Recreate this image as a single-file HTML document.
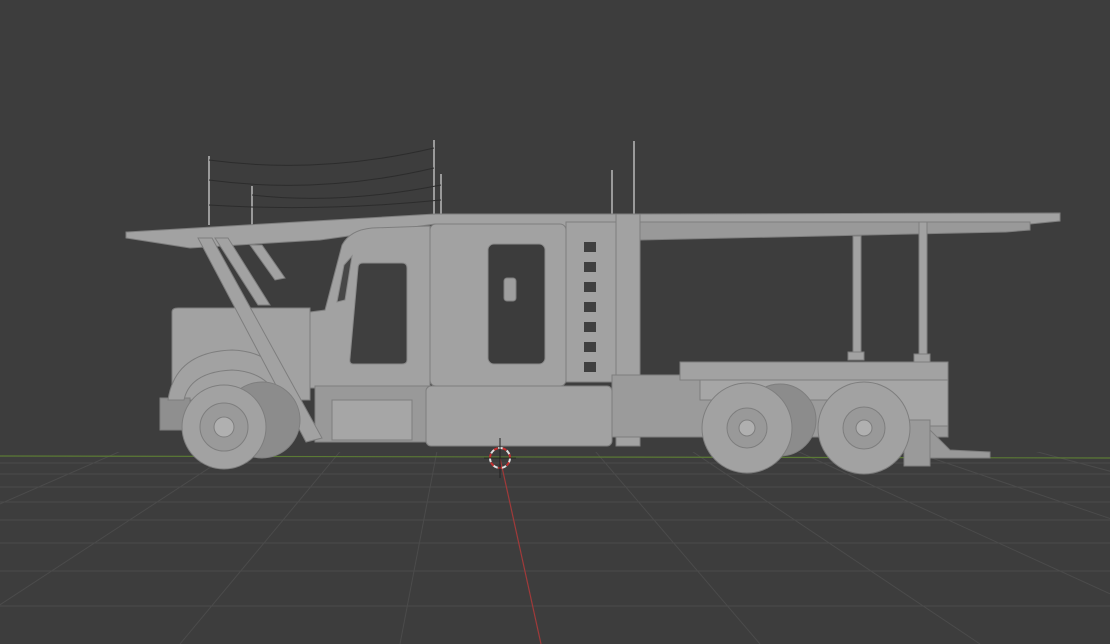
<!DOCTYPE html>
<html><head><style>html,body{margin:0;padding:0;background:#3d3d3d;width:1110px;height:644px;overflow:hidden}</style></head>
<body>
<svg width="1110" height="644" viewBox="0 0 1110 644" xmlns="http://www.w3.org/2000/svg">
<rect width="1110" height="644" fill="#3d3d3d"/>
<defs><clipPath id="g"><rect x="0" y="452" width="1110" height="192"/></clipPath></defs>
<g clip-path="url(#g)" stroke="#4b4b4b" stroke-width="1">
<line x1="0" y1="463" x2="1110" y2="463"/><line x1="0" y1="474" x2="1110" y2="474"/>
<line x1="0" y1="487" x2="1110" y2="487"/><line x1="0" y1="502" x2="1110" y2="502"/>
<line x1="0" y1="520" x2="1110" y2="520"/><line x1="0" y1="543" x2="1110" y2="543"/>
<line x1="0" y1="571" x2="1110" y2="571"/><line x1="0" y1="606" x2="1110" y2="606"/>
<line x1="466" y1="300" x2="-900" y2="644"/><line x1="466" y1="300" x2="-600" y2="644"/>
<line x1="466" y1="300" x2="-320" y2="644"/><line x1="466" y1="300" x2="-60" y2="644"/>
<line x1="466" y1="300" x2="180" y2="644"/><line x1="466" y1="300" x2="400" y2="644"/>
<line x1="466" y1="300" x2="760" y2="644"/><line x1="466" y1="300" x2="980" y2="644"/>
<line x1="466" y1="300" x2="1220" y2="644"/><line x1="466" y1="300" x2="1480" y2="644"/>
<line x1="466" y1="300" x2="1760" y2="644"/><line x1="466" y1="300" x2="2060" y2="644"/>
</g>
<line x1="0" y1="456" x2="1110" y2="458" stroke="#5b7a35" stroke-width="1.2"/>
<line x1="500" y1="458" x2="541" y2="644" stroke="#a03a3a" stroke-width="1.2"/>
<g fill="#a2a2a2" stroke="#7e7e7e" stroke-width="1">
<g stroke="#9a9a9a" stroke-width="2"><line x1="209" y1="156" x2="209" y2="225"/><line x1="252" y1="186" x2="252" y2="225"/><line x1="434" y1="140" x2="434" y2="215"/><line x1="441" y1="174" x2="441" y2="215"/><line x1="612" y1="170" x2="612" y2="215"/><line x1="634" y1="141" x2="634" y2="215"/></g>
<g fill="none" stroke="#2c2c2c" stroke-width="1"><path d="M209 160 Q320 175 434 148"/><path d="M209 180 Q320 195 434 168"/><path d="M252 195 Q340 205 441 185"/><path d="M209 205 Q320 212 441 200"/></g>
<polygon points="126,232 435,214 640,214 1060,213 1060,221 1030,224 640,236 435,224 320,240 190,248 126,238"/>
<polygon points="590,222 1030,222 1030,230 1006,232 640,240 590,238" fill="#999"/>
<polygon points="215,238 228,238 270,305 258,305"/>
<polygon points="250,245 262,245 285,278 275,280"/>
<rect x="853" y="236" width="8" height="120"/><rect x="919" y="222" width="8" height="136"/>
<rect x="848" y="352" width="16" height="8"/><rect x="914" y="354" width="16" height="8"/>
<path d="M172 312 Q172 308 178 308 L310 308 L310 400 L172 400 Z"/>
<path d="M310 312 L325 310 L342 245 Q350 230 372 228 L430 226 L430 388 L310 388 Z"/>
<rect x="430" y="224" width="136" height="162" rx="6"/>
<rect x="566" y="222" width="50" height="160"/>
<rect x="616" y="214" width="24" height="232"/>
<path d="M358 268 Q358 263 363 263 L402 263 Q407 263 407 268 L407 360 Q407 364 402 364 L353 364 Q349 364 350 358 Z" fill="#3f3f3f" stroke="#8a8a8a"/>
<path d="M344 265 L352 256 L345 300 L337 302 Z" fill="#474747" stroke="#888"/>
<rect x="488" y="244" width="57" height="120" rx="6" fill="#3c3c3c" stroke="#8a8a8a"/>
<rect x="504" y="278" width="12" height="23" rx="3" fill="#9e9e9e"/>
<g fill="#3f3f3f" stroke="none"><rect x="584" y="242" width="12" height="10"/><rect x="584" y="262" width="12" height="10"/><rect x="584" y="282" width="12" height="10"/><rect x="584" y="302" width="12" height="10"/><rect x="584" y="322" width="12" height="10"/><rect x="584" y="342" width="12" height="10"/><rect x="584" y="362" width="12" height="10"/></g>
<rect x="315" y="386" width="115" height="56" fill="#999"/>
<rect x="332" y="400" width="80" height="40" fill="#a6a6a6"/>
<rect x="426" y="386" width="186" height="60" rx="5"/>
<rect x="160" y="398" width="30" height="32" fill="#8f8f8f"/>
<path d="M168 400 Q175 352 232 350 Q290 352 300 420 L285 420 Q278 372 232 370 Q190 372 184 400 Z"/>
<polygon points="198,238 212,238 322,438 306,442"/>
<rect x="612" y="375" width="336" height="62" fill="#9b9b9b"/>
<rect x="680" y="362" width="268" height="18"/>
<polygon points="700,380 948,380 948,426 905,426 890,400 700,400" fill="#a6a6a6"/>
<polygon points="930,430 950,450 990,452 990,458 930,458" fill="#999"/>
<rect x="904" y="420" width="26" height="46" fill="#9a9a9a"/>
<circle cx="262" cy="420" r="38" fill="#8c8c8c"/>
<circle cx="224" cy="427" r="42"/>
<circle cx="224" cy="427" r="24" fill="#9a9a9a"/>
<circle cx="224" cy="427" r="10" fill="#b0b0b0"/>
<circle cx="780" cy="420" r="36" fill="#8c8c8c"/>
<circle cx="747" cy="428" r="45"/>
<circle cx="747" cy="428" r="20" fill="#999"/>
<circle cx="747" cy="428" r="8" fill="#b0b0b0"/>
<circle cx="864" cy="428" r="46"/>
<circle cx="864" cy="428" r="21" fill="#999"/>
<circle cx="864" cy="428" r="8" fill="#b0b0b0"/>
</g>
<circle cx="500" cy="458" r="10" fill="none" stroke="#e0e0e0" stroke-width="2" stroke-dasharray="5 4"/>
<circle cx="500" cy="458" r="10" fill="none" stroke="#c83030" stroke-width="2" stroke-dasharray="4 5" stroke-dashoffset="4.5"/>
<line x1="500" y1="438" x2="500" y2="478" stroke="#222" stroke-width="1"/>
<line x1="484" y1="458" x2="516" y2="458" stroke="#222" stroke-width="1"/>
</svg>
</body></html>
